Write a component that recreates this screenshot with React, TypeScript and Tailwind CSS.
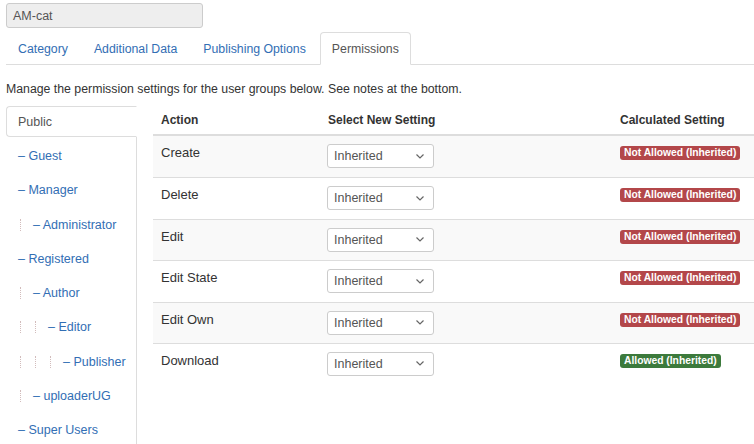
import React from "react";

const groups = [
  { name: "Guest", level: 0 },
  { name: "Manager", level: 0 },
  { name: "Administrator", level: 1 },
  { name: "Registered", level: 0 },
  { name: "Author", level: 1 },
  { name: "Editor", level: 2 },
  { name: "Publisher", level: 3 },
  { name: "uploaderUG", level: 1 },
  { name: "Super Users", level: 0 },
];

const actions = [
  { name: "Create", allowed: false },
  { name: "Delete", allowed: false },
  { name: "Edit", allowed: false },
  { name: "Edit State", allowed: false },
  { name: "Edit Own", allowed: false },
  { name: "Download", allowed: true },
];

const tabs = ["Category", "Additional Data", "Publishing Options", "Permissions"];

function Chevron() {
  return (
    <svg width="8" height="5" viewBox="0 0 8 5" className="text-[#666]">
      <polyline points="0.5,0.5 4,4 7.5,0.5" fill="none" stroke="currentColor" strokeWidth="1.2" />
    </svg>
  );
}

export default function App() {
  return (
    <div className="w-[754px] h-[444px] overflow-hidden bg-white text-[12.5px] leading-[18px] text-[#333] font-['Liberation_Sans',Arial,sans-serif]">
      {/* title field */}
      <div className="pl-[6px] pt-[3px]">
        <div className="w-[197px] h-[25px] bg-[#eee] border border-[#ccc] rounded-[3px] pl-[6px] flex items-center text-[#555]">
          AM-cat
        </div>
      </div>

      {/* tabs */}
      <div className="mt-[4px] ml-[6px] flex border-b border-[#ddd] text-[12.3px]">
        {tabs.map((t) => {
          const active = t === "Permissions";
          return (
            <div
              key={t}
              className={`mr-[2px] px-[11px] h-[33px] flex items-center -mb-px border rounded-t-[4px] ${
                active ? "bg-white border-[#ddd] border-b-white text-[#555]" : "border-transparent text-[#326eb4]"
              }`}
            >
              {t}
            </div>
          );
        })}
      </div>

      <p className="pl-[6px] mt-[15px] text-[12.3px]">
        Manage the permission settings for the user groups below. See notes at the bottom.
      </p>

      <div className="flex mt-[8px] pl-[6px]">
        {/* group list */}
        <div className="w-[131px] shrink-0 border-r border-[#ddd] h-[400px]">
          <div className="h-[31px] -mr-px bg-white border border-r-white border-[#ddd] rounded-l-[4px] pl-[11px] flex items-center text-[#555]">
            Public
          </div>
          <div className="mt-[2px]">
            {groups.map((g) => (
              <div key={g.name} className="h-[34.25px] pl-[12px] flex items-center text-[#326eb4]">
                {Array.from({ length: g.level }).map((_, i) => (
                  <span key={i} className="w-[15px] h-[12px] flex shrink-0">
                    <span className="ml-[2px] h-[12px] border-l border-dotted border-[#d2bcbc]" />
                  </span>
                ))}
                <span>– {g.name}</span>
              </div>
            ))}
          </div>
        </div>

        {/* actions table */}
        <div className="ml-[16px] flex-1">
          <div className="flex h-[30px] items-center text-[12px] font-bold border-b-2 border-[#ddd]">
            <div className="w-[166px] pl-[8px]">Action</div>
            <div className="w-[293px] pl-[9px]">Select New Setting</div>
            <div className="flex-1 pl-[8px]">Calculated Setting</div>
          </div>
          {actions.map((a, i) => (
            <div
              key={a.name}
              className={`flex h-[41.4px] items-start text-[13px] ${i > 0 ? "border-t border-[#ddd]" : ""} ${
                i % 2 === 0 ? "bg-[#f9f9f9]" : ""
              }`}
            >
              <div className="w-[166px] pl-[8px] pt-[8px]">{a.name}</div>
              <div className="w-[293px] pl-[8px] pt-[8px]">
                <div className="w-[107px] h-[24px] border border-[#ccc] rounded-[3px] bg-white flex items-center justify-between pl-[6px] pr-[9px] text-[#555] text-[12.5px]">
                  <span>Inherited</span>
                  <Chevron />
                </div>
              </div>
              <div className="flex-1 pl-[8px] pt-[7px]">
                <span
                  className={`inline-block px-[4px] h-[14px] leading-[14px] rounded-[3px] text-[10.3px] font-bold text-white ${
                    a.allowed ? "bg-[#3c7a3c]" : "bg-[#b3474a]"
                  }`}
                >
                  {a.allowed ? "Allowed (Inherited)" : "Not Allowed (Inherited)"}
                </span>
              </div>
            </div>
          ))}
        </div>
      </div>
    </div>
  );
}
